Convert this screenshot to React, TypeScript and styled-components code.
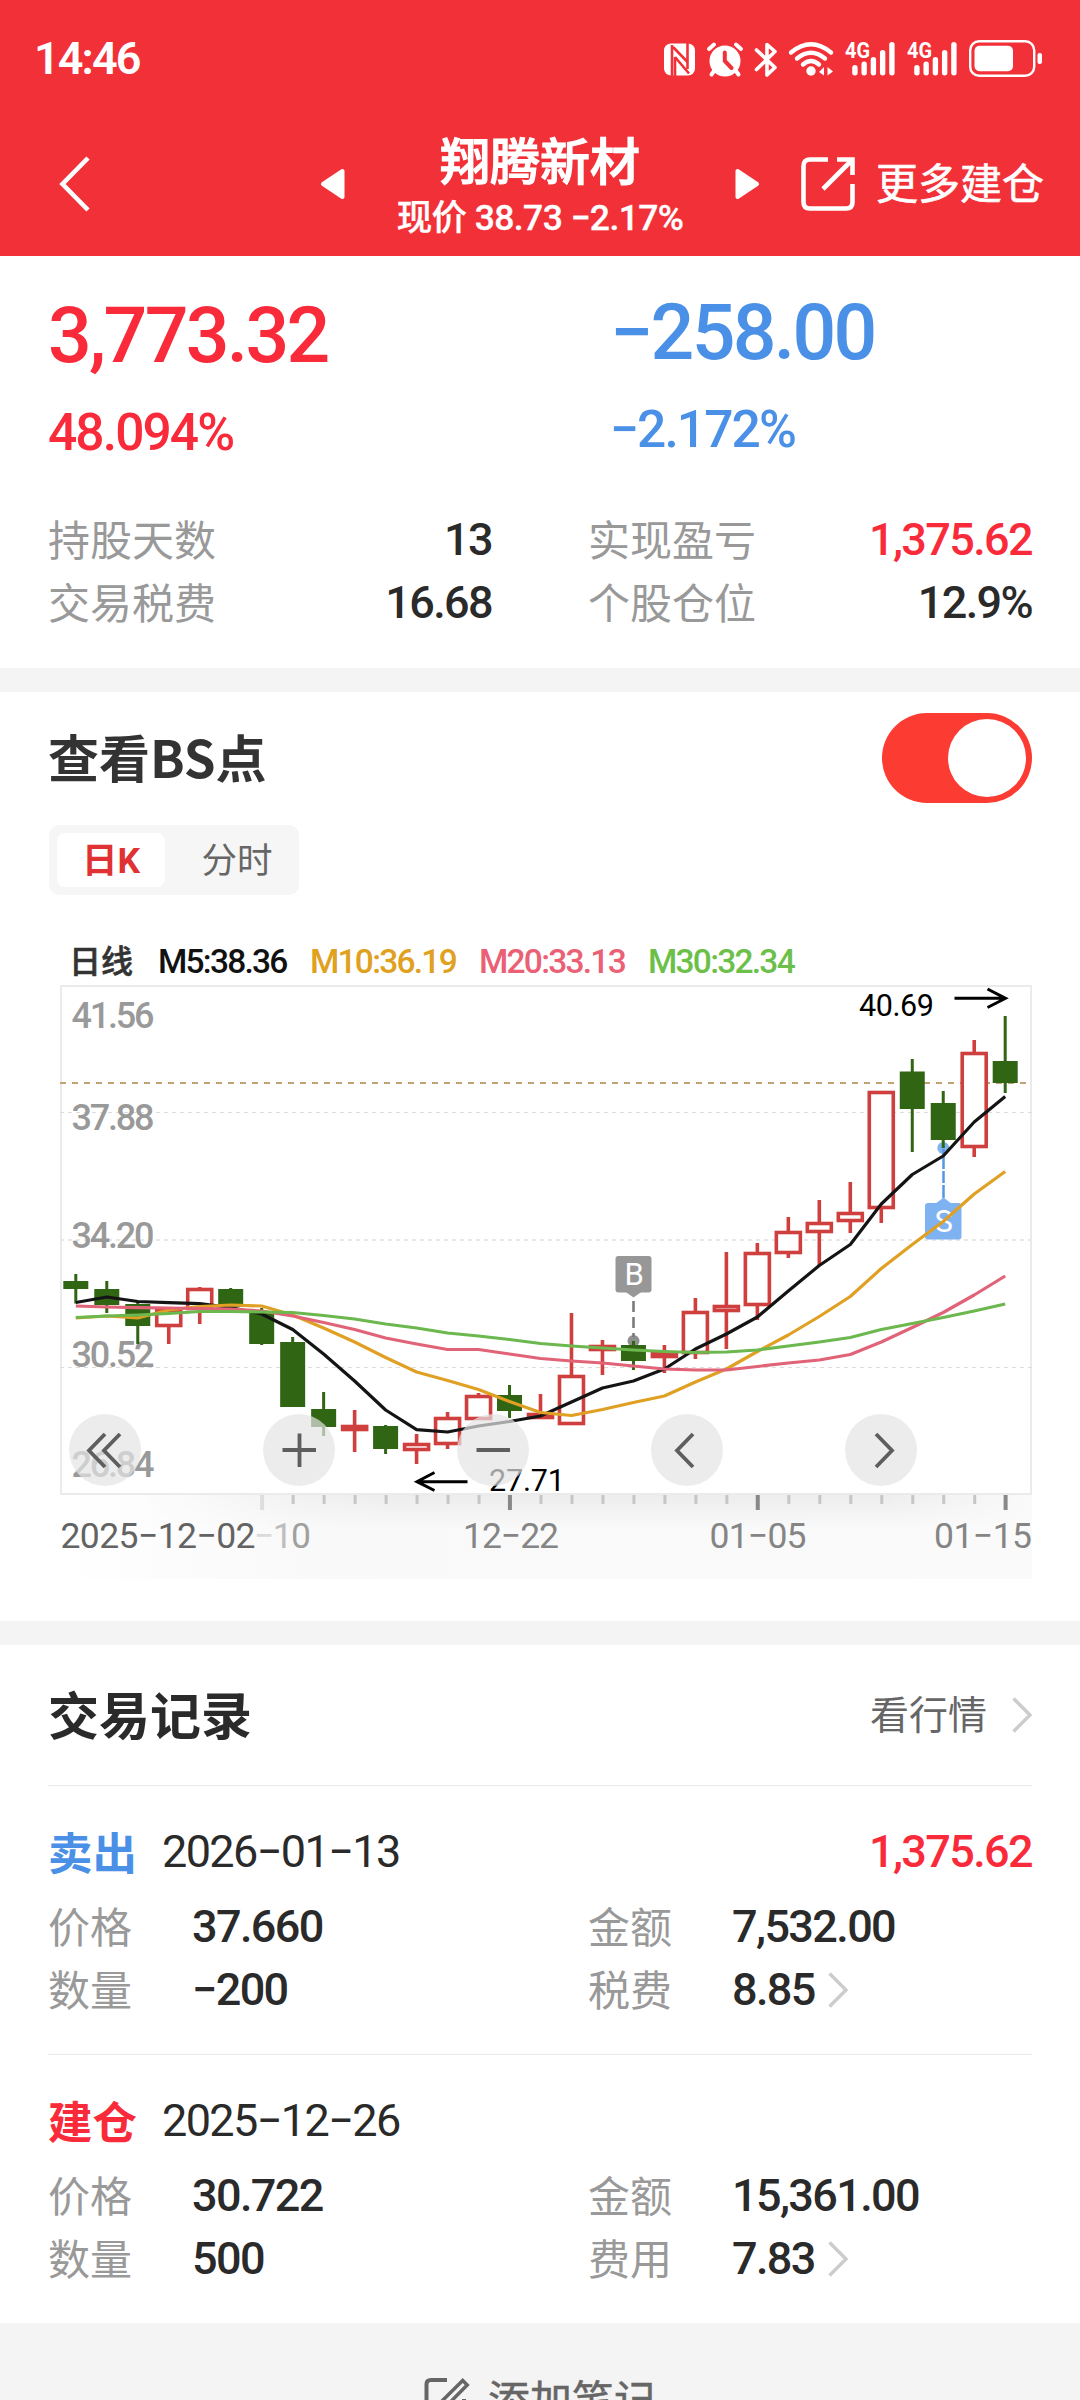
import React from 'react';
import styled, { createGlobalStyle } from 'styled-components';

const GlobalStyle = createGlobalStyle`
  * { box-sizing: border-box; }
  html, body { margin: 0; padding: 0; background: #fff; }
  body { font-family: Roboto, "Noto Sans CJK SC", sans-serif; color: #2a2a2a; }
`;

const RED = '#f92b3a';
const BLUE = '#4a90e6';
const BRAND = '#f23038';

const Screen = styled.div`
  width: 1080px;
  height: 2400px;
  overflow: hidden;
  display: flex;
  flex-direction: column;
  background: #fff;
`;

/* ---------- status bar and navigation ---------- */

const Header = styled.header`
  height: 256px;
  flex: none;
  background: ${BRAND};
  color: #fff;
`;

const StatusBar = styled.div`
  height: 112px;
  padding: 5px 37px 0 34px;
  display: flex;
  align-items: center;
  justify-content: space-between;
`;

const Clock = styled.span`
  font-size: 45px;
  font-weight: 600;
  line-height: 48px;
  letter-spacing: -1.9px;
`;

const StatusIcons = styled.div`
  display: flex;
  align-items: center;
  gap: 11px;
`;

const Icon = styled.svg`
  display: block;
  flex: none;
  overflow: visible;
`;

const NavBar = styled.nav`
  height: 144px;
  display: grid;
  grid-template-columns: 320px 440px 1fr;
  align-items: center;
`;

const BackButton = styled.div`
  padding-left: 59px;
`;

const Switcher = styled.div`
  display: flex;
  align-items: center;
  justify-content: space-between;
`;

const StockTitle = styled.div`
  display: flex;
  flex-direction: column;
  align-items: center;
  padding-top: 6px;
`;

const StockName = styled.h1`
  margin: 0;
  font-size: 50px;
  font-weight: 500;
  line-height: 62px;
  -webkit-text-stroke: 1.2px currentColor;
`;

const StockQuote = styled.div`
  font-size: 35.5px;
  font-weight: 500;
  line-height: 48px;
  letter-spacing: -0.6px;
  white-space: nowrap;
  -webkit-text-stroke: 0.3px currentColor;
`;

const MoreButton = styled.div`
  display: flex;
  align-items: center;
  gap: 21px;
  padding-left: 41px;
  font-size: 42px;
  line-height: 56px;
  white-space: nowrap;
  -webkit-text-stroke: 0.6px currentColor;
`;

const MoreText = styled.span`
  padding-top: 2px;
`;

/* ---------- shared pieces ---------- */

const Band = styled.div`
  height: 24px;
  flex: none;
  background: #f4f4f4;
`;

const Num = styled.span<{ $color?: string; $weight?: number }>`
  font-size: 45px;
  font-weight: ${(p) => p.$weight ?? 500};
  letter-spacing: -0.036em;
  color: ${(p) => p.$color ?? '#2a2a2a'};
  white-space: nowrap;
`;

const Label = styled.span`
  font-size: 42px;
  color: #999;
  padding-top: 5px;
  white-space: nowrap;
`;

/* ---------- summary ---------- */

const Summary = styled.section`
  height: 412px;
  flex: none;
  padding: 0 48px;
  display: grid;
  grid-template-columns: 444px 444px;
  grid-template-rows: 252px 126px;
  column-gap: 96px;
`;

const Headline = styled.div<{ $color: string; $top: number; $indent?: number }>`
  display: flex;
  flex-direction: column;
  padding-top: ${(p) => p.$top}px;
  padding-left: ${(p) => p.$indent ?? 0}px;
  color: ${(p) => p.$color};
  font-weight: 500;
  white-space: nowrap;
`;

const Amount = styled.div`
  font-size: 77px;
  line-height: 90px;
  letter-spacing: -0.035em;
`;

const Percent = styled.div`
  margin-top: 7px;
  font-size: 51.5px;
  line-height: 90px;
  letter-spacing: -0.037em;
`;

const StatList = styled.div`
  display: flex;
  flex-direction: column;
`;

const StatRow = styled.div`
  height: 63px;
  line-height: 58px;
  display: flex;
  align-items: center;
  justify-content: space-between;
`;

/* ---------- chart section ---------- */

const ChartSection = styled.section`
  height: 929px;
  flex: none;
  padding: 0 48px;
`;

const SectionHead = styled.div<{ $h: number }>`
  height: ${(p) => p.$h}px;
  display: flex;
  align-items: center;
  justify-content: space-between;
`;

const SectionTitle = styled.h2<{ $color: string }>`
  margin: 0;
  padding-bottom: 4px;
  font-family: "Noto Sans CJK SC", sans-serif;
  font-size: 51px;
  font-weight: 700;
  line-height: 64px;
  color: ${(p) => p.$color};
`;

const Toggle = styled.div`
  width: 150px;
  height: 90px;
  padding: 6px;
  border-radius: 45px;
  background: #fc3b32;
  display: flex;
  justify-content: flex-end;
`;

const Knob = styled.div`
  width: 78px;
  height: 78px;
  border-radius: 50%;
  background: #fff;
`;

const Segmented = styled.div`
  width: 250px;
  height: 70px;
  margin: 1px 0 0 1px;
  padding: 8px;
  border-radius: 10px;
  background: #f6f6f6;
  display: flex;
  justify-content: space-between;
`;

const Segment = styled.div<{ $active?: boolean }>`
  width: 108px;
  height: 54px;
  border-radius: 8px;
  line-height: 57px;
  text-align: center;
  font-size: 35.5px;
  font-weight: ${(p) => (p.$active ? 700 : 400)};
  color: ${(p) => (p.$active ? '#e03232' : '#666')};
  background: ${(p) => (p.$active ? '#fff' : 'transparent')};
`;

const Legend = styled.div`
  height: 40px;
  margin-top: 46px;
  padding-left: 21px;
  display: grid;
  grid-template-columns: 89px 152px 169px 169px auto;
  line-height: 42px;
  white-space: nowrap;
`;

const LegendTitle = styled.span`
  font-size: 32px;
  font-weight: 500;
  color: #333;
  -webkit-text-stroke: 0.6px currentColor;
`;

const LegendItem = styled.span<{ $color: string }>`
  font-size: 33.5px;
  font-weight: 500;
  letter-spacing: -1.75px;
  color: ${(p) => p.$color};
`;

const ChartWrap = styled.div`
  position: relative;
  width: 972px;
  height: 596px;
  margin: 3px 0 0 12px;
`;

const ChartControls = styled.div`
  position: absolute;
  left: 9px;
  top: 430px;
  display: flex;
  gap: 122px;
`;

const RoundButton = styled.div`
  width: 72px;
  height: 72px;
  border-radius: 50%;
  background: rgba(228, 228, 228, 0.7);
`;

/* ---------- records ---------- */

const Records = styled.section`
  height: 678px;
  flex: none;
  padding: 0 48px;
`;

const MoreLink = styled.div`
  display: flex;
  align-items: center;
  gap: 25px;
  font-size: 39px;
  line-height: 56px;
  color: #666;
`;

const Record = styled.article`
  height: 269px;
  border-top: 1px solid #ebebeb;
  padding-top: 34px;
`;

const RecordHead = styled.div`
  height: 64px;
  line-height: 64px;
  display: flex;
  align-items: center;
`;

const Side = styled.span<{ $color: string }>`
  width: 114px;
  padding-top: 5px;
  font-size: 44.5px;
  font-weight: 700;
  color: ${(p) => p.$color};
`;

const Profit = styled.div`
  margin-left: auto;
  display: flex;
  align-items: center;
`;

const Fields = styled.div`
  margin-top: 11px;
  display: grid;
  grid-template-columns: 540px 1fr;
  grid-auto-rows: 63px;
`;

const Field = styled.div`
  display: grid;
  grid-template-columns: 144px auto 1fr;
  align-items: center;
  line-height: 58px;
`;

const Footer = styled.footer`
  height: 77px;
  flex: none;
  background: #f4f4f4;
  color: #666;
  display: flex;
  justify-content: center;
  align-items: flex-start;
  gap: 18px;
  padding-top: 51px;
  font-size: 42px;
  line-height: 56px;
  overflow: hidden;
  white-space: nowrap;
  -webkit-text-stroke: 0.5px currentColor;
`;

/* ---------- icons ---------- */

function NfcIcon() {
  return (
    <Icon width={32} height={40} viewBox="664 38 32 40">
      <rect x="664" y="42.5" width="31" height="32" rx="7" fill="#fff" />
      <g stroke={BRAND} strokeWidth="2.6" fill="none">
        <path d="M672 44V75" />
        <path d="M687.5 42V68" />
        <path d="M673 46L687.5 61" />
        <path d="M675 56L689 72.5" />
        <path d="M675 56V75" />
      </g>
    </Icon>
  );
}

function AlarmIcon() {
  return (
    <Icon width={36} height={40} viewBox="707 38 36 40">
      <circle cx="725" cy="60" r="15.5" fill="#fff" />
      <g stroke="#fff" strokeWidth="4" strokeLinecap="round">
        <path d="M709 48L714 43.5M736 43.5L741 48M714 70L711.5 73.5M736 70L738.5 73.5" />
      </g>
      <path d="M724.8 51.5V60L731.5 67" stroke={BRAND} strokeWidth="4" fill="none" strokeLinecap="round" />
    </Icon>
  );
}

function BluetoothIcon() {
  return (
    <Icon width={24} height={40} viewBox="754 38 24 40">
      <path
        d="M756.5 49L775 66.5L767 74V43.5L775 50.5L756.5 68.5"
        stroke="#fff"
        strokeWidth="3.6"
        fill="none"
        strokeLinecap="round"
        strokeLinejoin="round"
      />
    </Icon>
  );
}

function WifiIcon() {
  return (
    <Icon width={45} height={40} viewBox="789 38 45 40">
      <g stroke="#fff" strokeWidth="4.4" fill="none" strokeLinecap="round">
        <path d="M791 51.5Q811 35 831 51.5" />
        <path d="M797 57.5Q811 46 825 57.5" />
        <path d="M803 63.5Q811 56.5 819 63.5" />
      </g>
      <circle cx="811" cy="70" r="4.7" fill="#fff" />
      <path d="M819 71L824 66V74.5ZM833 70.5L827.5 74.5V66Z" fill="#fff" />
    </Icon>
  );
}

function SignalIcon() {
  const bars = [64, 60.5, 56, 49, 41];
  return (
    <Icon width={51} height={40} viewBox="845 38 51 40">
      <text x="845" y="57" fontSize="21.5" fontWeight="700" fill="#fff" textLength="25" lengthAdjust="spacingAndGlyphs">
        4G
      </text>
      {bars.map((top, i) => (
        <rect key={top} x={852.2 + i * 9.25} y={top} width="5.4" height={74.5 - top} rx="2.7" fill="#fff" />
      ))}
    </Icon>
  );
}

function BatteryIcon() {
  return (
    <Icon width={74} height={40} viewBox="969 38 74 40">
      <rect x="970.2" y="40.2" width="64" height="34.5" rx="9" fill="none" stroke="#fff" strokeWidth="2.4" />
      <rect x="974.5" y="44.8" width="38.5" height="25.5" rx="5" fill="#fff" />
      <rect x="1037.5" y="52" width="4.5" height="11" rx="2" fill="#fff" />
    </Icon>
  );
}

function Chevron({ w = 20, h = 36 }: { w?: number; h?: number }) {
  return (
    <Icon width={w} height={h} viewBox="0 0 20 36">
      <path d="M1.5 1.5L18 18L1.5 34.5" fill="none" stroke="#ccc" strokeWidth="3.4" />
    </Icon>
  );
}

/* ---------- chart ---------- */

type Candle = [up: 0 | 1, high: number, low: number, top: number, bottom: number];

const CANDLES: Candle[] = [
  [0, 1274, 1303.5, 1281, 1289],
  [0, 1281, 1313, 1289, 1305],
  [0, 1302, 1344, 1304, 1326],
  [1, 1309, 1344, 1309, 1327],
  [1, 1287, 1324, 1288, 1310],
  [0, 1288, 1311, 1289, 1307],
  [0, 1308, 1345, 1312, 1344],
  [0, 1337, 1407, 1342, 1407],
  [0, 1392, 1436, 1409, 1427],
  [1, 1410, 1452, 1425, 1431],
  [0, 1425, 1454, 1426, 1449],
  [1, 1434, 1464, 1443, 1451],
  [1, 1412, 1449, 1417, 1445],
  [1, 1393, 1420, 1395, 1420],
  [0, 1385, 1418, 1395, 1411],
  [1, 1394, 1419, 1413, 1419],
  [1, 1313, 1425, 1375, 1425],
  [1, 1340, 1375, 1345, 1351],
  [0, 1341, 1370, 1345, 1361],
  [1, 1345, 1373, 1352, 1358],
  [1, 1298, 1359, 1311, 1354],
  [1, 1252, 1349, 1305, 1312],
  [1, 1243, 1320, 1252, 1306],
  [1, 1217, 1258, 1231, 1254],
  [1, 1200, 1265, 1222, 1233],
  [1, 1182, 1233, 1212, 1222],
  [1, 1091, 1223, 1091, 1209],
  [0, 1059, 1152, 1071.5, 1109],
  [0, 1091, 1148, 1103, 1140],
  [1, 1040, 1157, 1052, 1148],
  [0, 1016, 1093, 1061, 1083],
];

const M5 = [1302.5, 1297, 1301.5, 1302.6, 1303.6, 1307.5, 1314, 1329.5, 1354, 1381, 1410, 1429.6, 1432, 1426, 1421.5, 1416, 1402, 1388, 1381, 1369, 1349, 1334, 1317, 1291, 1265.5, 1244.5, 1204, 1174.5, 1156, 1122, 1096.5];
const M10 = [1318, 1316, 1318, 1310, 1306.5, 1305, 1306, 1315, 1328, 1342, 1357.5, 1372, 1380.5, 1389.5, 1401.5, 1412.5, 1415.5, 1409.5, 1402.5, 1396, 1382, 1369, 1351.5, 1335, 1316.5, 1296.5, 1268.5, 1244.5, 1221.5, 1194, 1171.5];
const M20 = [1306, 1307, 1307.7, 1308, 1308.5, 1309, 1311, 1316, 1322.5, 1329.5, 1338, 1344, 1349.5, 1349.5, 1354, 1358.5, 1361, 1363, 1366, 1369, 1370, 1370, 1366.5, 1363, 1360, 1354.5, 1342, 1327.5, 1312.5, 1295, 1276];
const M30 = [1317.5, 1316, 1315, 1313.5, 1311.5, 1311.5, 1312, 1312.5, 1315.5, 1319, 1324, 1328, 1333, 1336, 1339.5, 1343.5, 1346, 1348, 1350, 1351.5, 1352.5, 1352, 1350, 1346, 1342, 1337.5, 1329.5, 1323.5, 1317.5, 1311, 1304];

const cx = (i: number) => 75.8 + i * 30.98;
const line = (ys: number[]) => ys.map((y, i) => `${cx(i).toFixed(1)},${y}`).join(' ');

const Y_LABELS: [string, number][] = [
  ['41.56', 1028],
  ['37.88', 1130],
  ['34.20', 1248],
  ['30.52', 1367],
  ['26.84', 1477],
];

function CandleShape({ c, x }: { c: Candle; x: number }) {
  const [up, high, low, top, bottom] = c;
  if (!up) {
    return (
      <g fill="#306514">
        <rect x={x - 1.5} y={high} width={3} height={low - high} />
        <rect x={x - 12.5} y={top} width={25} height={bottom - top} />
      </g>
    );
  }
  return (
    <g stroke="#cf3f3e" strokeWidth={3.6}>
      <path d={`M${x} ${high}V${top}M${x} ${bottom}V${low}`} />
      <rect x={x - 12} y={top + 1.5} width={24} height={bottom - top - 3} fill="#fff" />
    </g>
  );
}

function KLineChart() {
  return (
    <Icon width={972} height={596} viewBox="60 984 972 596" fontFamily="Roboto, sans-serif">
      <defs>
        <linearGradient id="stripX" x1="0" x2="1" y1="0" y2="0">
          <stop offset="0" stopColor="#fff" />
          <stop offset="0.25" stopColor="#f9f9f9" />
          <stop offset="1" stopColor="#fafafa" />
        </linearGradient>
        <linearGradient id="stripY" x1="0" x2="0" y1="0" y2="1">
          <stop offset="0" stopColor="#000" stopOpacity="0.05" />
          <stop offset="1" stopColor="#000" stopOpacity="0" />
        </linearGradient>
        <linearGradient id="fadeX" x1="0" x2="1" y1="0" y2="0">
          <stop offset="0.08" stopColor="#000" />
          <stop offset="0.35" stopColor="#fff" />
          <stop offset="0.85" stopColor="#fff" />
          <stop offset="1" stopColor="#000" />
        </linearGradient>
        <mask id="fade">
          <rect x="60" y="1494" width="972" height="86" fill="url(#fadeX)" />
        </mask>
      </defs>

      <rect x="60" y="1495" width="972" height="84" fill="url(#stripX)" />
      <rect x="60" y="1495" width="972" height="34" fill="url(#stripY)" mask="url(#fade)" />

      <rect x="61" y="986" width="970" height="508" fill="#fff" stroke="#ebebeb" strokeWidth="2" />
      <g stroke="#dcdcdc" strokeDasharray="4 4">
        <path d="M60 1112.5H1032" />
        <path d="M60 1240H1032" stroke="#e8e8e8" strokeWidth="2" />
        <path d="M60 1367.5H1032" />
      </g>
      <path d="M60 1083H1027" stroke="#c0a273" strokeWidth="2" strokeDasharray="6 6" />

      {Y_LABELS.map(([t, y]) => (
        <text key={t} x="71.5" y={y} fontSize="36" fontWeight="500" fill="#999" textLength="83">
          {t}
        </text>
      ))}

      <circle cx={633.5} cy={1341} r={6} fill="#8f8f8f" />
      <circle cx={943.3} cy={1148} r={6} fill="#7fb3f0" />
      {CANDLES.map((c, i) => (
        <CandleShape key={i} c={c} x={cx(i)} />
      ))}

      <path d="M633.5 1301V1337" stroke="#777" strokeWidth="2.5" strokeDasharray="11 5" />
      <path d="M625 1291.5H642L633.5 1297.5Z" fill="#979797" />
      <rect x="615.5" y="1256" width="36" height="36.5" rx="3" fill="#979797" />
      <text x="634.2" y="1285" fontSize="31" fill="#fff" textAnchor="middle">
        B
      </text>

      <path d="M943.5 1149V1198" stroke="#5796e4" strokeWidth="2.5" strokeDasharray="20 2 12 2" />
      <path d="M935 1204H952L943.5 1197.5Z" fill="#7fb2f0" />
      <rect x="925" y="1203" width="36.5" height="36.5" rx="3" fill="#7fb2f0" />
      <text x="943.8" y="1232" fontSize="31" fill="#fff" textAnchor="middle">
        S
      </text>

      <g fill="none" strokeWidth="3.2" strokeLinejoin="round">
        <polyline points={line(M5)} stroke="#141414" />
        <polyline points={line(M10)} stroke="#dfa024" />
        <polyline points={line(M20)} stroke="#e16378" />
        <polyline points={line(M30)} stroke="#6cb84f" />
      </g>

      <g stroke="#000" strokeWidth="3" fill="none">
        <path d="M954.5 998.3H1005M987.5 989L1005.5 998.3L987.5 1007.5" />
        <path d="M467.5 1481.7H418M434.5 1472.5L417 1481.7L434.5 1490.5" />
      </g>
      <text x="859" y="1015.5" fontSize="30.5" textLength="75">
        40.69
      </text>
      <text x="489" y="1490.7" fontSize="30.5" textLength="76">
        27.71
      </text>

      {CANDLES.map((_, i) => {
        if (i < 6) return null;
        const major = (i - 6) % 8 === 0;
        return (
          <rect
            key={i}
            x={cx(i) - (major ? 1.6 : 1)}
            y={1495}
            width={major ? 4 : 3}
            height={major ? 15 : 9}
            fill={i === 6 ? '#dedede' : major ? '#888' : '#c6c6c6'}
          />
        );
      })}

      <g fontSize="35.5" fontWeight="450" fill="#858585">
        <text x="60.5" y="1548" fill="#636363" textLength="195">
          2025−12−02
        </text>
        <text x="254" y="1548" textLength="57">
          <tspan fill="#dadada">−</tspan>
          <tspan fill="#bdbdbd">1</tspan>
          <tspan fill="#a0a0a0">0</tspan>
        </text>
        <text x="463" y="1548" textLength="96">
          12−22
        </text>
        <text x="709.5" y="1548" textLength="97">
          01−05
        </text>
        <text x="934" y="1548" textLength="98">
          01−15
        </text>
      </g>
    </Icon>
  );
}

const CONTROL_PATHS = [
  'M36 20L20 36.5L36 53M51 20L35 36.5L51 53',
  'M36.5 19.5V53M19.5 36H53',
  'M19.5 36H53',
  'M42 20L26 36.5L42 53',
  'M31 20L47 36.5L31 53',
];

interface FieldData {
  label: string;
  value: string;
  link?: boolean;
}

interface RecordData {
  side: string;
  color: string;
  date: string;
  profit?: string;
  fields: FieldData[];
}

const RECORDS: RecordData[] = [
  {
    side: '卖出',
    color: BLUE,
    date: '2026−01−13',
    profit: '1,375.62',
    fields: [
      { label: '价格', value: '37.660' },
      { label: '金额', value: '7,532.00' },
      { label: '数量', value: '−200' },
      { label: '税费', value: '8.85', link: true },
    ],
  },
  {
    side: '建仓',
    color: RED,
    date: '2025−12−26',
    fields: [
      { label: '价格', value: '30.722' },
      { label: '金额', value: '15,361.00' },
      { label: '数量', value: '500' },
      { label: '费用', value: '7.83', link: true },
    ],
  },
];

const LinkMark = styled.span`
  padding-left: 13px;
`;

export default function App() {
  return (
    <Screen>
      <GlobalStyle />
      <Header>
        <StatusBar>
          <Clock>14:46</Clock>
          <StatusIcons>
            <NfcIcon />
            <AlarmIcon />
            <BluetoothIcon />
            <WifiIcon />
            <SignalIcon />
            <SignalIcon />
            <BatteryIcon />
          </StatusIcons>
        </StatusBar>
        <NavBar>
          <BackButton>
            <Icon width={32} height={56} viewBox="0 0 32 56">
              <path d="M29 2L3.5 28L29 54" fill="none" stroke="#fff" strokeWidth="4.6" />
            </Icon>
          </BackButton>
          <Switcher>
            <Icon width={25} height={32} viewBox="0 0 25 32">
              <path d="M3 16L22.5 3V29Z" fill="#fff" stroke="#fff" strokeWidth="4" strokeLinejoin="round" />
            </Icon>
            <StockTitle>
              <StockName>翔腾新材</StockName>
              <StockQuote>现价 38.73 −2.17%</StockQuote>
            </StockTitle>
            <Icon width={25} height={32} viewBox="0 0 25 32">
              <path d="M22 16L2.5 3V29Z" fill="#fff" stroke="#fff" strokeWidth="4" strokeLinejoin="round" />
            </Icon>
          </Switcher>
          <MoreButton>
            <Icon width={54} height={54} viewBox="0 0 54 54">
              <g fill="none" stroke="#fff" strokeWidth="4.6">
                <path d="M27 2.5H9Q2.5 2.5 2.5 9V45Q2.5 51.5 9 51.5H45Q51.5 51.5 51.5 45V27" />
                <path d="M22 32L50.5 3.5M36 2.5H51.5V18" />
              </g>
            </Icon>
            <MoreText>更多建仓</MoreText>
          </MoreButton>
        </NavBar>
      </Header>

      <Summary>
        <Headline $color={RED} $top={35}>
          <Amount>3,773.32</Amount>
          <Percent>48.094%</Percent>
        </Headline>
        <Headline $color={BLUE} $top={32} $indent={22}>
          <Amount>−258.00</Amount>
          <Percent>−2.172%</Percent>
        </Headline>
        <StatList>
          <StatRow>
            <Label>持股天数</Label>
            <Num>13</Num>
          </StatRow>
          <StatRow>
            <Label>交易税费</Label>
            <Num>16.68</Num>
          </StatRow>
        </StatList>
        <StatList>
          <StatRow>
            <Label>实现盈亏</Label>
            <Num $color={RED}>1,375.62</Num>
          </StatRow>
          <StatRow>
            <Label>个股仓位</Label>
            <Num>12.9%</Num>
          </StatRow>
        </StatList>
      </Summary>

      <Band />

      <ChartSection>
        <SectionHead $h={132}>
          <SectionTitle $color="#333">查看BS点</SectionTitle>
          <Toggle>
            <Knob />
          </Toggle>
        </SectionHead>
        <Segmented>
          <Segment $active>日K</Segment>
          <Segment>分时</Segment>
        </Segmented>
        <Legend>
          <LegendTitle>日线</LegendTitle>
          <LegendItem $color="#111">M5:38.36</LegendItem>
          <LegendItem $color="#e0a020">M10:36.19</LegendItem>
          <LegendItem $color="#ea6075">M20:33.13</LegendItem>
          <LegendItem $color="#6cc04a">M30:32.34</LegendItem>
        </Legend>
        <ChartWrap>
          <KLineChart />
          <ChartControls>
            {CONTROL_PATHS.map((d) => (
              <RoundButton key={d}>
                <Icon width={72} height={72} viewBox="0 0 72 72">
                  <path d={d} fill="none" stroke="#5e5e5e" strokeWidth="3.8" />
                </Icon>
              </RoundButton>
            ))}
          </ChartControls>
        </ChartWrap>
      </ChartSection>

      <Band />

      <Records>
        <SectionHead $h={140}>
          <SectionTitle $color="#2a2a2a">交易记录</SectionTitle>
          <MoreLink>
            <MoreText>看行情</MoreText>
            <Chevron />
          </MoreLink>
        </SectionHead>
        {RECORDS.map((r) => (
          <Record key={r.date}>
            <RecordHead>
              <Side $color={r.color}>{r.side}</Side>
              <Num $weight={400}>{r.date}</Num>
              {r.profit && (
                <Profit>
                  <Num $color={RED}>{r.profit}</Num>
                </Profit>
              )}
            </RecordHead>
            <Fields>
              {r.fields.map((f) => (
                <Field key={f.label}>
                  <Label>{f.label}</Label>
                  <Num>{f.value}</Num>
                  {f.link && (
                    <LinkMark>
                      <Chevron />
                    </LinkMark>
                  )}
                </Field>
              ))}
            </Fields>
          </Record>
        ))}
      </Records>

      <Footer>
        <Icon width={46} height={46} viewBox="0 1 46 46">
          <g fill="none" stroke="#666" strokeWidth="4">
            <path d="M23 7H7Q2.500 7 2.500 11V40Q2.500 44 7 44H36Q40 44 40 40V26" />
            <path d="M17 29L38.700 7.500L43.200 12L22 33.500L16 34.500Z" strokeWidth="3.500" />
          </g>
        </Icon>
        添加笔记
      </Footer>
    </Screen>
  );
}
